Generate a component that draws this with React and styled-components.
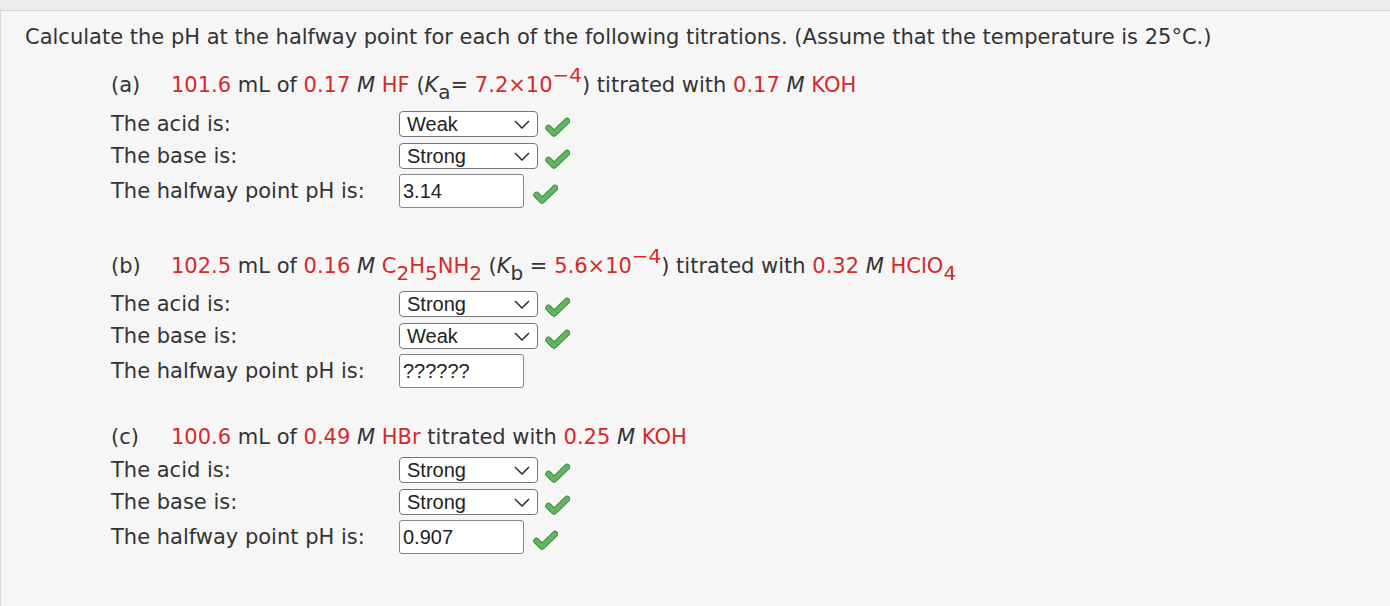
import React from "react";
import styled, { createGlobalStyle } from "styled-components";

const GlobalStyle = createGlobalStyle`
  html, body {
    margin: 0;
    padding: 0;
    background: #ececec;
  }
  body {
    font-family: "DejaVu Sans", Verdana, sans-serif;
    color: #333;
  }
`;

const Page = styled.div`
  height: 606px;
  padding-top: 10px;
  box-sizing: border-box;
`;

const Panel = styled.div`
  height: 100%;
  box-sizing: border-box;
  background: #f6f6f6;
  border-top: 1px solid #d8d8d8;
  border-left: 1px solid #d8d8d8;
  padding: 11px 0 0 24px;
`;

const Title = styled.div`
  font-size: 21px;
  line-height: 30px;
  height: 30px;
  white-space: nowrap;
`;

const Section = styled.div`
  margin-left: 86px;
  margin-top: ${(props) => props.top}px;
`;

const Header = styled.div`
  font-size: 21px;
  line-height: 30px;
  height: 30px;
  white-space: nowrap;
  margin-bottom: ${(props) => props.gap}px;
`;

const Tag = styled.span`
  display: inline-block;
  width: 60px;
`;

const Red = styled.span`
  color: #d42a2a;
`;

const Sub = styled.span`
  font-size: 0.95em;
  line-height: 0;
  position: relative;
  top: 7px;
`;

const Sup = styled.span`
  font-size: 0.95em;
  line-height: 0;
  position: relative;
  top: -10px;
`;

const Row = styled.div`
  display: flex;
  align-items: center;
  height: ${(props) => (props.input ? 34 : 26)}px;
  margin-top: ${(props) => (props.first ? 0 : props.input ? 5 : 6)}px;
`;

const Label = styled.div`
  width: 288px;
  font-size: 21px;
  line-height: 26px;
  white-space: nowrap;
`;

const SelectBox = styled.div`
  width: 139px;
  height: 26px;
  box-sizing: border-box;
  display: flex;
  align-items: center;
  justify-content: space-between;
  padding: 0 7px 0 7px;
  background: #fff;
  border: 1px solid #777;
  border-radius: 4px;
  font-family: "Liberation Sans", Arial, sans-serif;
  font-size: 20px;
  color: #222;
`;

const InputBox = styled.div`
  width: 125px;
  height: 34px;
  box-sizing: border-box;
  display: flex;
  align-items: center;
  padding-left: 3px;
  background: #fff;
  border: 1px solid #858585;
  border-radius: 3px;
  font-family: "Liberation Sans", Arial, sans-serif;
  font-size: 20px;
  color: #222;
`;

const CheckWrap = styled.span`
  display: inline-flex;
  margin-left: ${(props) => (props.input ? 9 : 7)}px;
  align-self: ${(props) => (props.input ? "center" : "flex-end")};
  position: relative;
  top: ${(props) => (props.input ? 3 : 0)}px;
`;

const Chevron = () => (
  <svg width="16" height="9" viewBox="0 0 16 9">
    <path d="M1 1 L8 8 L15 1" fill="none" stroke="#333" strokeWidth="1.6" />
  </svg>
);

const Check = ({ input }) => (
  <CheckWrap input={input}>
    <svg width="25" height="20" viewBox="0 0 25 20">
      <path
        d="M3.5 11 L9 16.5 L22 4"
        fill="none"
        stroke="#3f8f3f"
        strokeWidth="6.5"
        strokeLinejoin="round"
        strokeLinecap="round"
      />
      <path
        d="M3.5 11 L9 16.5 L22 4"
        fill="none"
        stroke="#62b562"
        strokeWidth="4.5"
        strokeLinejoin="round"
        strokeLinecap="round"
      />
    </svg>
  </CheckWrap>
);

const Select = ({ value }) => (
  <SelectBox>
    <span>{value}</span>
    <Chevron />
  </SelectBox>
);

const Part = ({ top, gap, header, acid, base, ph }) => (
  <Section top={top}>
    <Header gap={gap}>{header}</Header>
    <Row first>
      <Label>The acid is:</Label>
      <Select value={acid} />
      <Check />
    </Row>
    <Row>
      <Label>The base is:</Label>
      <Select value={base} />
      <Check />
    </Row>
    <Row input>
      <Label>The halfway point pH is:</Label>
      <InputBox>{ph.value}</InputBox>
      {ph.ok && <Check input />}
    </Row>
  </Section>
);

const App = () => (
  <>
    <GlobalStyle />
    <Page>
      <Panel>
        <Title>
          Calculate the pH at the halfway point for each of the following titrations. (Assume that the temperature is 25°C.)
        </Title>

        <Part
          top={18}
          gap={11}
          header={
            <>
              <Tag>(a)</Tag>
              <Red>101.6</Red> mL of <Red>0.17</Red> <i>M</i> <Red>HF</Red> (<i>K</i>
              <Sub>a</Sub>= <Red>7.2×10<Sup>−4</Sup></Red>) titrated with <Red>0.17</Red> <i>M</i>{" "}
              <Red>KOH</Red>
            </>
          }
          acid="Weak"
          base="Strong"
          ph={{ value: "3.14", ok: true }}
        />

        <Part
          top={43}
          gap={10}
          header={
            <>
              <Tag>(b)</Tag>
              <Red>102.5</Red> mL of <Red>0.16</Red> <i>M</i>{" "}
              <Red>
                C<Sub>2</Sub>H<Sub>5</Sub>NH<Sub>2</Sub>
              </Red>{" "}
              (<i>K</i>
              <Sub>b</Sub> = <Red>5.6×10<Sup>−4</Sup></Red>) titrated with <Red>0.32</Red> <i>M</i>{" "}
              <Red>
                HClO<Sub>4</Sub>
              </Red>
            </>
          }
          acid="Strong"
          base="Weak"
          ph={{ value: "??????", ok: false }}
        />

        <Part
          top={34}
          gap={5}
          header={
            <>
              <Tag>(c)</Tag>
              <Red>100.6</Red> mL of <Red>0.49</Red> <i>M</i> <Red>HBr</Red> titrated with <Red>0.25</Red>{" "}
              <i>M</i> <Red>KOH</Red>
            </>
          }
          acid="Strong"
          base="Strong"
          ph={{ value: "0.907", ok: true }}
        />
      </Panel>
    </Page>
  </>
);

export default App;
